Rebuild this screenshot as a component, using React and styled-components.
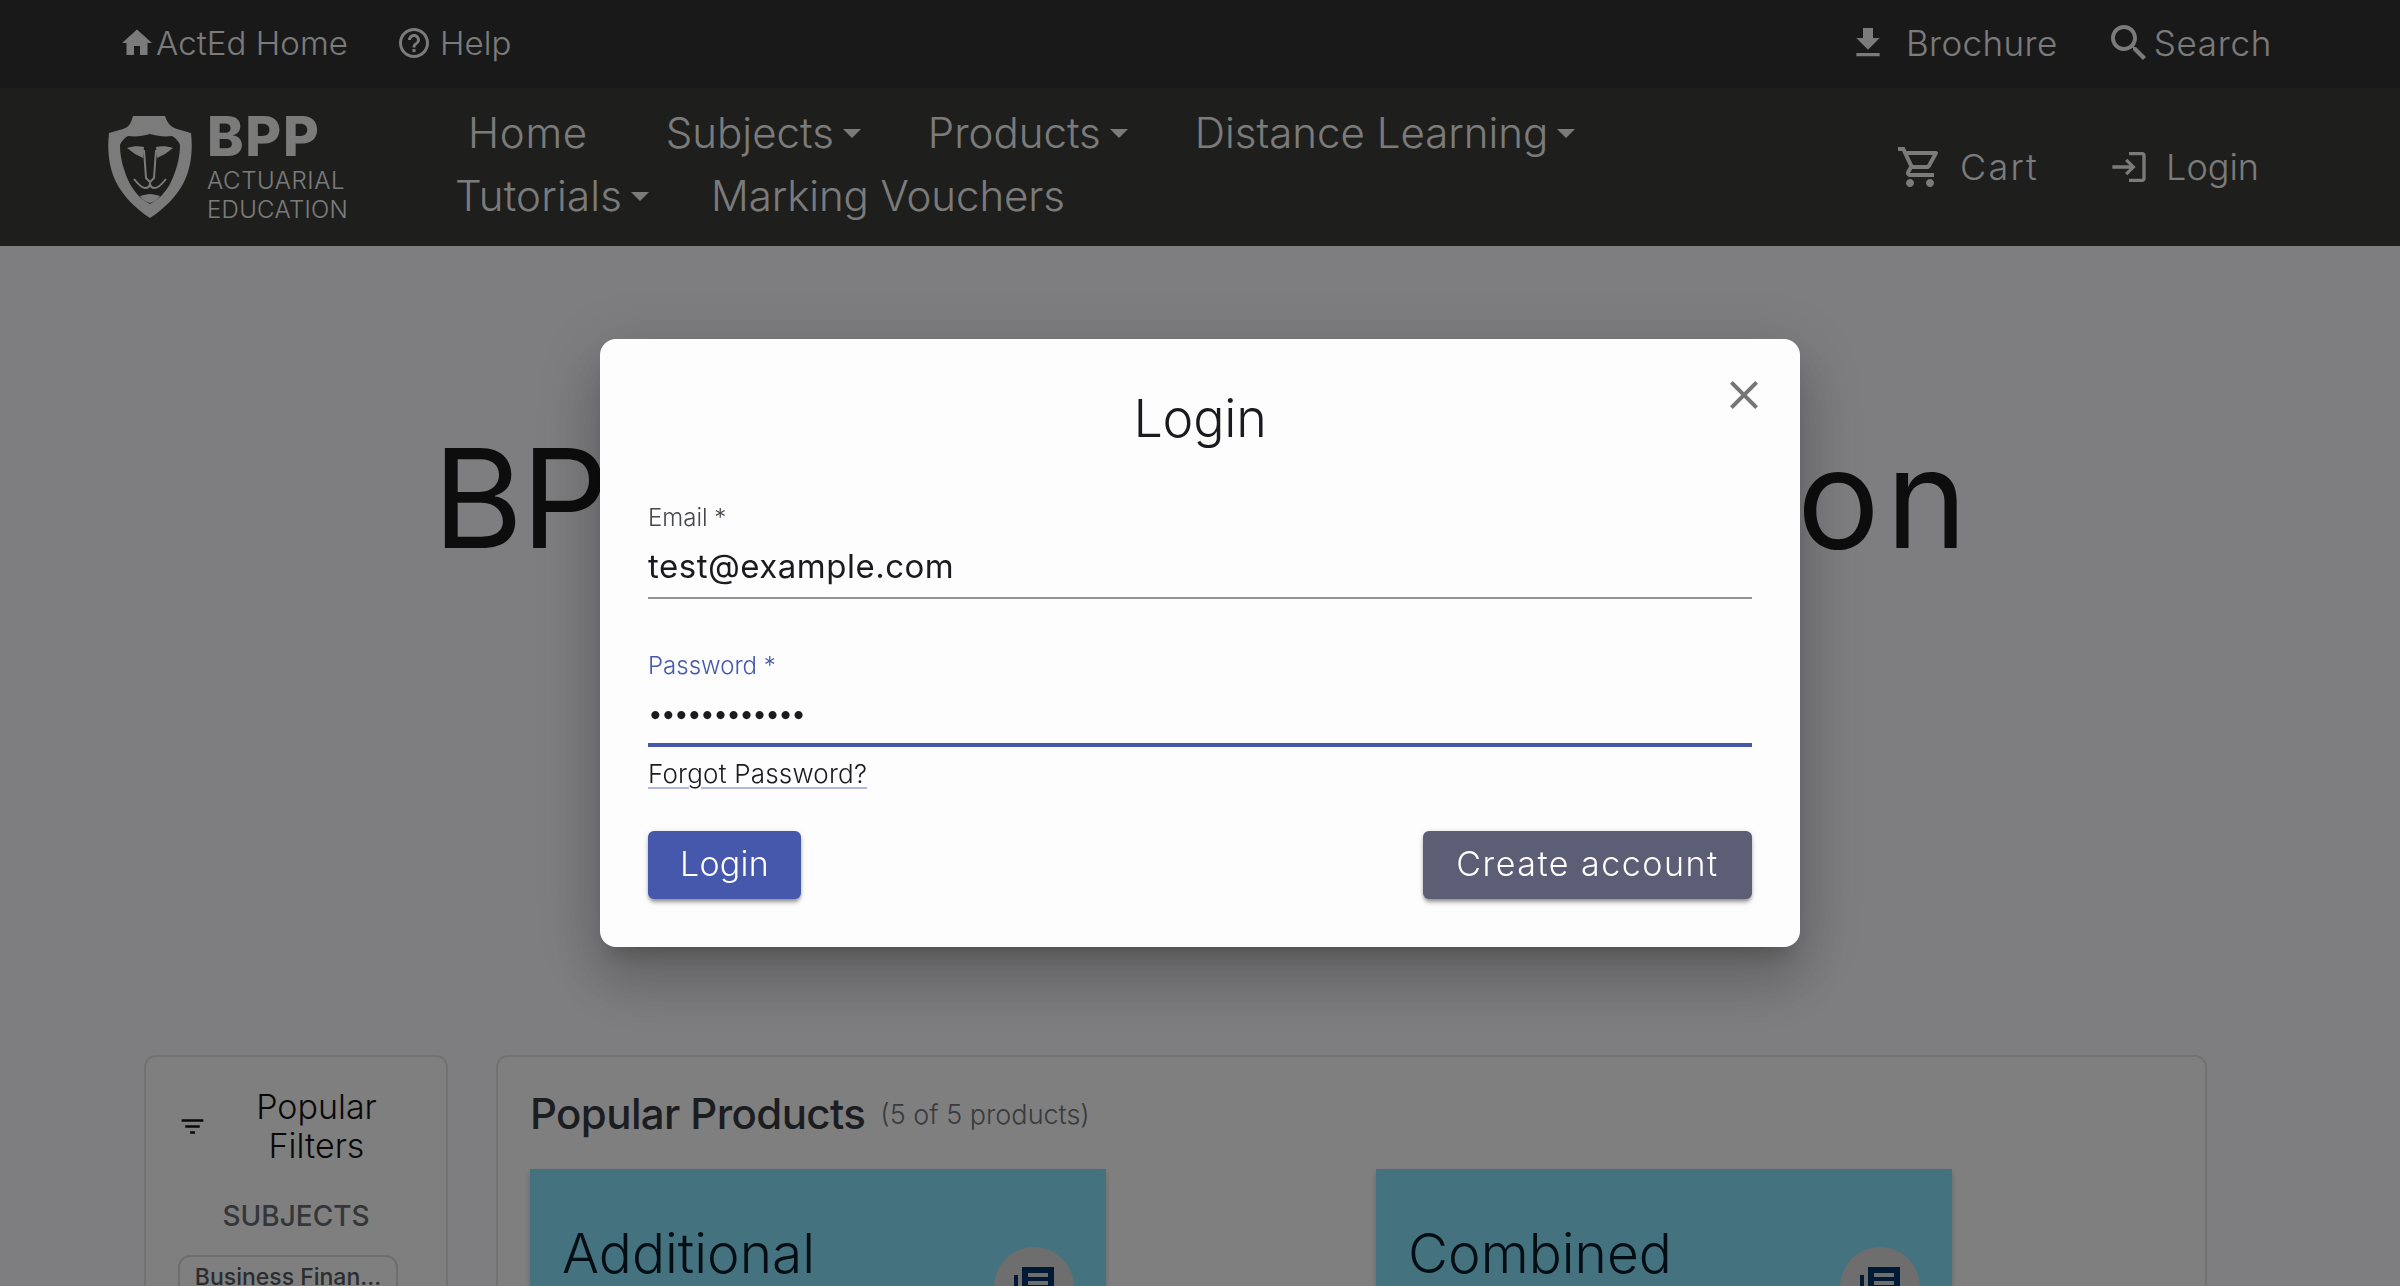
import React from "react";
import styled, { createGlobalStyle } from "styled-components";

const GlobalStyle = createGlobalStyle`
  html, body {
    margin: 0;
    height: 1286px;
    overflow: hidden;
    background: #fdfbff;
    font-family: "Inter", "Liberation Sans", sans-serif;
  }
`;

const paths = {
  home: "M10 20v-6h4v6h5v-8h3L12 3 2 12h3v8z",
  help: "M11 18h2v-2h-2v2zm1-16C6.48 2 2 6.48 2 12s4.48 10 10 10 10-4.48 10-10S17.52 2 12 2zm0 18c-4.41 0-8-3.59-8-8s3.59-8 8-8 8 3.59 8 8-3.59 8-8 8zm0-14c-2.21 0-4 1.79-4 4h2c0-1.1.9-2 2-2s2 .9 2 2c0 2-3 1.75-3 5h2c0-2.25 3-2.5 3-5 0-2.21-1.79-4-4-4z",
  download: "M5 20h14v-2H5v2zM19 9h-4V3H9v6H5l7 7 7-7z",
  search: "M15.5 14h-.79l-.28-.27C15.41 12.59 16 11.11 16 9.5 16 5.91 13.09 3 9.5 3S3 5.91 3 9.5 5.91 16 9.5 16c1.61 0 3.09-.59 4.23-1.57l.27.28v.79l5 4.99L20.49 19l-4.99-5zm-6 0C7.01 14 5 11.99 5 9.5S7.01 5 9.5 5 14 7.01 14 9.5 11.99 14 9.5 14z",
  cart: "M15.55 13c.75 0 1.41-.41 1.75-1.03l3.58-6.49c.37-.66-.11-1.48-.87-1.48H5.21l-.94-2H1v2h2l3.6 7.59-1.35 2.44C4.52 15.37 5.48 17 7 17h12v-2H7l1.1-2h7.45zM6.16 6h12.15l-2.76 5H8.53L6.16 6zM7 18c-1.1 0-1.99.9-1.99 2S5.9 22 7 22s2-.9 2-2-.9-2-2-2zm10 0c-1.1 0-1.99.9-1.99 2s.89 2 1.99 2 2-.9 2-2-.9-2-2-2z",
  login: "M11 7 9.6 8.4l2.6 2.6H2v2h10.2l-2.6 2.6L11 17l5-5-5-5zm9 12h-8v2h8c1.1 0 2-.9 2-2V5c0-1.1-.9-2-2-2h-8v2h8v14z",
  close: "M19 6.41 17.59 5 12 10.59 6.41 5 5 6.41 10.59 12 5 17.59 6.41 19 12 13.41 17.59 19 19 17.59 13.41 12z",
  filter: "M10 18h4v-2h-4v2zM3 6v2h18V6H3zm3 7h12v-2H6v2z",
  books: "M4 6H2v16h16v-2H4V6zm18-4H6v16h16V2zm-3 9H9V9h10v2zm-4 4H9v-2h6v2zm4-8H9V5h10v2z",
};

function Icon({ name, size }) {
  return (
    <svg width={size} height={size} viewBox="0 0 24 24" fill="currentColor" style={{ flexShrink: 0 }}>
      <path d={paths[name]} />
    </svg>
  );
}

// shield with the lion head cut into it
function Logo() {
  return (
    <svg width="84" height="102" viewBox="0 0 84 102">
      <path
        fill="#f6f6f6"
        d="M25 0H57C59 6 62 11 69 13L83 17C85 34 83 52 76 66 69 80 56 93 42 102 28 93 15 80 8 66 1 52-1 34 1 17L15 13C22 11 23 6 25 0Z"
      />
      <path
        fill="#3c3c3a"
        d="M20 20C28 21 34 20 42 18 50 20 56 21 64 20 68 22 71 26 72 29 72 42 68 56 62 68 57 77 50 84 42 88 34 84 27 77 22 68 16 56 12 42 12 29 13 26 16 22 20 20Z"
      />
      <path
        fill="#f6f6f6"
        d="M19 32C25 30 31 30 36 31L35 42 27 38ZM65 32C59 30 53 30 48 31L49 42 57 38ZM32 80C36 79 39 78 42 78 45 78 48 79 52 80 49 84 46 86 42 87 38 86 35 84 32 80Z"
      />
      <path
        fill="none"
        stroke="#f6f6f6"
        strokeWidth="2"
        d="M36 34L38 62 42 66 46 62 48 34M26 63C30 68 34 72 37 72 40 72 42 70 42 67 42 70 44 72 47 72 50 72 54 68 58 63"
      />
    </svg>
  );
}

function NavItem({ children, caret, spacing }) {
  return (
    <NavLink $spacing={spacing}>
      {children}
      {caret && <Caret />}
    </NavLink>
  );
}

function App() {
  return (
    <>
      <GlobalStyle />
      <TopBar>
        <TopGroup $gap={48}>
          <TopLink $gap={1} $size={33} $spacing={0.1}>
            <Icon name="home" size={36} />
            <span>ActEd Home</span>
          </TopLink>
          <TopLink $gap={8} $size={33} $spacing={0.1}>
            <Icon name="help" size={36} />
            <span>Help</span>
          </TopLink>
        </TopGroup>
        <TopGroup $gap={47}>
          <TopLink $gap={18} $size={35} $spacing={0.4}>
            <Icon name="download" size={40} />
            <span>Brochure</span>
          </TopLink>
          <TopLink $gap={1} $size={35} $spacing={0.7}>
            <Icon name="search" size={48} />
            <span>Search</span>
          </TopLink>
        </TopGroup>
      </TopBar>

      <MainNav>
        <Brand>
          <Logo />
          <BrandText>
            <BrandName>BPP</BrandName>
            <BrandLine $spacing={0.6}>ACTUARIAL</BrandLine>
            <BrandLine $spacing={0.3}>EDUCATION</BrandLine>
          </BrandText>
        </Brand>
        <NavRows>
          <NavRow $indent={13} $gap={67}>
            <HomeSlot>
              <NavItem spacing={0.7}>Home</NavItem>
            </HomeSlot>
            <NavItem caret spacing={0}>Subjects</NavItem>
            <NavItem caret spacing={0}>Products</NavItem>
            <NavItem caret spacing={0}>Distance Learning</NavItem>
          </NavRow>
          <NavRow $gap={62}>
            <NavItem caret spacing={0.2}>Tutorials</NavItem>
            <NavItem spacing={-0.1}>Marking Vouchers</NavItem>
          </NavRow>
        </NavRows>
        <NavActions>
          <ActionLink $gap={16} $spacing={2.2}>
            <Icon name="cart" size={48} />
            <span>Cart</span>
          </ActionLink>
          <ActionLink $gap={17}>
            <Icon name="login" size={40} />
            <span>Login</span>
          </ActionLink>
        </NavActions>
      </MainNav>

      <Hero>
        <HeroTitle>
          BPP Actuarial Educati<HeroTail>on</HeroTail>
        </HeroTitle>
      </Hero>

      <Content>
        <FilterPanel>
          <FilterHead>
            <Icon name="filter" size={29} />
            <FilterTitle>Popular Filters</FilterTitle>
          </FilterHead>
          <FilterSection>SUBJECTS</FilterSection>
          <Chip>Business Finan...</Chip>
        </FilterPanel>
        <ProductsPanel>
          <ProductsHead>
            <ProductsTitle>Popular Products</ProductsTitle>
            <ProductsCount>(5 of 5 products)</ProductsCount>
          </ProductsHead>
          <CardGrid>
            {["Additional", "Combined"].map((title) => (
              <Card key={title}>
                <CardTitle>{title}</CardTitle>
                <CardBadge>
                  <Icon name="books" size={48} />
                </CardBadge>
              </Card>
            ))}
          </CardGrid>
        </ProductsPanel>
      </Content>

      <Backdrop>
        <Modal>
          <CloseButton>
            <Icon name="close" size={48} />
          </CloseButton>
          <ModalTitle>Login</ModalTitle>
          <Field>
            <FieldLabel>Email *</FieldLabel>
            <FieldInput type="text" value="test@example.com" readOnly />
          </Field>
          <Field $focused>
            <FieldLabel $focused>Password *</FieldLabel>
            <FieldInput $focused type="password" value="123456789012" readOnly />
          </Field>
          <ForgotLink>Forgot Password?</ForgotLink>
          <ButtonRow>
            <ModalButton $bg="#4658ac" $width={153} $spacing={0.2}>Login</ModalButton>
            <ModalButton $bg="#5b5e75" $width={329} $spacing={1.5}>Create account</ModalButton>
          </ButtonRow>
        </Modal>
      </Backdrop>
    </>
  );
}

const TopBar = styled.div`
  height: 88px;
  background: #323232;
  color: #f6f6f6;
  display: flex;
  align-items: center;
  justify-content: space-between;
  padding: 0 128px 2px 119px;
  box-sizing: border-box;
`;

const TopGroup = styled.div`
  display: flex;
  align-items: center;
  gap: ${(props) => props.$gap}px;
`;

const TopLink = styled.div`
  display: flex;
  align-items: center;
  gap: ${(props) => props.$gap}px;
  font-size: ${(props) => props.$size}px;
  font-weight: 300;
  letter-spacing: ${(props) => props.$spacing}px;
  line-height: 48px;
`;

const MainNav = styled.div`
  height: 158px;
  background: #3c3c3a;
  color: #f6f6f6;
  display: flex;
  align-items: center;
  padding: 0 141px 0 108px;
  box-sizing: border-box;
`;

const Brand = styled.div`
  display: flex;
  align-items: center;
  gap: 15px;
  width: 347px;
  flex-shrink: 0;
`;

const BrandText = styled.div`
  display: flex;
  flex-direction: column;
`;

const BrandName = styled.div`
  font-size: 55px;
  font-weight: 800;
  line-height: 50px;
  letter-spacing: 1.8px;
  margin-bottom: 5px;
`;

const BrandLine = styled.div`
  font-size: 24px;
  font-weight: 300;
  line-height: 29px;
  letter-spacing: ${(props) => props.$spacing}px;
`;

const NavRows = styled.div`
  flex: 1;
  display: flex;
  flex-direction: column;
  gap: 15px;
  padding-bottom: 5px;
`;

const NavRow = styled.div`
  display: flex;
  align-items: center;
  gap: ${(props) => props.$gap}px;
  margin-left: ${(props) => props.$indent || 0}px;
`;

const HomeSlot = styled.div`
  margin-right: 11px;
`;

const NavLink = styled.div`
  display: flex;
  align-items: center;
  gap: 9px;
  font-size: 42px;
  font-weight: 300;
  line-height: 48px;
  letter-spacing: ${(props) => props.$spacing}px;
  white-space: nowrap;
`;

const Caret = styled.span`
  width: 0;
  height: 0;
  border-left: 9px solid transparent;
  border-right: 9px solid transparent;
  border-top: 9px solid currentColor;
`;

const NavActions = styled.div`
  display: flex;
  align-items: center;
  gap: 70px;
`;

const ActionLink = styled.div`
  display: flex;
  align-items: center;
  gap: ${(props) => props.$gap}px;
  font-size: 36px;
  font-weight: 300;
  letter-spacing: ${(props) => props.$spacing || 0}px;
`;

const Hero = styled.div`
  height: 809px;
  padding: 167px 0 0 6px;
  box-sizing: border-box;
  text-align: center;
`;

const HeroTitle = styled.h1`
  margin: 0;
  font-size: 138px;
  font-weight: 400;
  line-height: 170px;
  color: #1a1a1a;
  letter-spacing: -2px;
  white-space: nowrap;
`;

const HeroTail = styled.span`
  letter-spacing: 6px;
`;

const Content = styled.div`
  display: flex;
  gap: 48px;
  padding: 0 193px 0 144px;
`;

const FilterPanel = styled.div`
  width: 304px;
  height: 500px;
  flex-shrink: 0;
  box-sizing: border-box;
  border: 2px solid #e4e4e4;
  border-radius: 12px;
  background: #fff;
  padding: 30px 32px 0;
`;

const FilterHead = styled.div`
  display: flex;
  align-items: center;
  color: #111;
`;

const FilterTitle = styled.div`
  flex: 1;
  text-align: center;
  font-size: 34px;
  font-weight: 300;
  line-height: 39px;
  padding-left: 12px;
`;

const FilterSection = styled.div`
  margin-top: 31px;
  text-align: center;
  font-size: 28px;
  font-weight: 500;
  line-height: 40px;
  color: #686d75;
`;

const Chip = styled.div`
  margin-top: 19px;
  box-sizing: border-box;
  width: 220px;
  height: 50px;
  border: 2px solid #dcdcdc;
  border-radius: 12px;
  font-size: 23px;
  font-weight: 500;
  color: #55595f;
  text-align: center;
  line-height: 40px;
  white-space: nowrap;
`;

const ProductsPanel = styled.div`
  flex: 1;
  height: 500px;
  box-sizing: border-box;
  border: 2px solid #e4e4e4;
  border-radius: 12px;
  background: #fff;
  padding: 33px 32px 0;
`;

const ProductsHead = styled.div`
  display: flex;
  align-items: center;
  gap: 15px;
`;

const ProductsTitle = styled.div`
  font-size: 42px;
  font-weight: 500;
  line-height: 48px;
  color: #363b42;
  letter-spacing: -0.6px;
`;

const ProductsCount = styled.div`
  font-size: 27px;
  font-weight: 300;
  color: #71767d;
`;

const CardGrid = styled.div`
  display: flex;
  gap: 270px;
  margin-top: 31px;
`;

const Card = styled.div`
  position: relative;
  width: 576px;
  height: 400px;
  background: #8ae4ff;
  box-shadow: 0 3px 6px rgba(0, 0, 0, 0.2);
  padding: 52px 32px 0;
  box-sizing: border-box;
`;

const CardTitle = styled.div`
  font-size: 55px;
  font-weight: 300;
  line-height: 64px;
  color: #041c28;
`;

const CardBadge = styled.div`
  position: absolute;
  top: 78px;
  right: 32px;
  width: 80px;
  height: 80px;
  border-radius: 50%;
  background: #dcdcdc;
  color: #00346c;
  display: flex;
  align-items: center;
  justify-content: center;
`;

const Backdrop = styled.div`
  position: fixed;
  inset: 0;
  background: rgba(0, 0, 0, 0.5);
  display: flex;
  justify-content: center;
  align-items: flex-start;
  padding-top: 339px;
  box-sizing: border-box;
`;

const Modal = styled.div`
  position: relative;
  width: 1200px;
  height: 608px;
  box-sizing: border-box;
  padding: 44px 48px 48px;
  background: #fdfdfd;
  border-radius: 16px;
  box-shadow: 0 16px 22px -10px rgba(0, 0, 0, 0.2), 0 36px 57px 5px rgba(0, 0, 0, 0.14),
    0 14px 69px 12px rgba(0, 0, 0, 0.12);
`;

const CloseButton = styled.div`
  position: absolute;
  top: 32px;
  right: 32px;
  color: #757575;
  display: flex;
`;

const ModalTitle = styled.div`
  font-size: 52px;
  font-weight: 300;
  line-height: 72px;
  text-align: center;
  color: #1a1a1f;
  letter-spacing: -0.2px;
  margin-bottom: 45px;
`;

const Field = styled.div`
  margin-bottom: ${(props) => (props.$focused ? 9 : 49)}px;
`;

const FieldLabel = styled.div`
  font-size: 24px;
  font-weight: 300;
  line-height: 36px;
  color: ${(props) => (props.$focused ? "#4658ac" : "#45464f")};
`;

const FieldInput = styled.input`
  display: block;
  width: 100%;
  box-sizing: border-box;
  height: 63px;
  border: 0;
  outline: 0;
  border-bottom: ${(props) => (props.$focused ? "4px solid #4658ac" : "2px solid #949494")};
  background: transparent;
  padding: 0 0 ${(props) => (props.$focused ? 0 : 2)}px;
  font-family: inherit;
  font-size: ${(props) => (props.type === "password" ? 26 : 33)}px;
  font-weight: 400;
  color: #1a1a1f;
  letter-spacing: ${(props) => (props.type === "password" ? "-1.6px" : "0.5px")};
`;

const ForgotLink = styled.div`
  font-size: 26px;
  font-weight: 300;
  line-height: 36px;
  color: #1a1a1f;
  letter-spacing: 0.2px;
  text-decoration: underline;
  text-decoration-color: #b0b8dc;
  text-decoration-thickness: 2px;
  text-underline-offset: 4px;
`;

const ButtonRow = styled.div`
  display: flex;
  justify-content: space-between;
  margin-top: 39px;
`;

const ModalButton = styled.button`
  width: ${(props) => props.$width}px;
  height: 68px;
  border: 0;
  border-radius: 6px;
  background: ${(props) => props.$bg};
  color: #fff;
  font-family: inherit;
  font-size: 34px;
  font-weight: 300;
  line-height: 64px;
  padding: 0 0 2px;
  letter-spacing: ${(props) => props.$spacing}px;
  box-shadow: 0 5px 5px -2px rgba(0, 0, 0, 0.3), 0 2px 3px rgba(0, 0, 0, 0.14), 0 1px 6px rgba(0, 0, 0, 0.12);
`;

export default App;
